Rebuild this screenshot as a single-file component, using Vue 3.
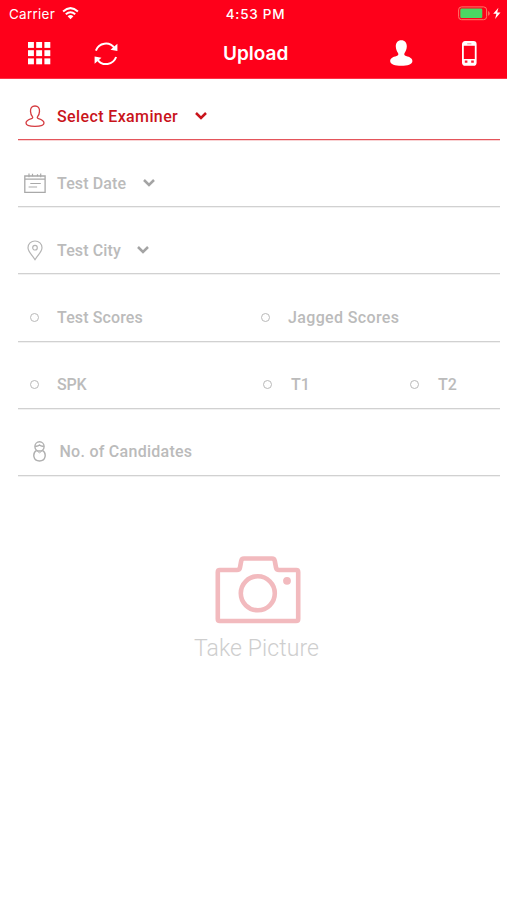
<script setup>
const squares = [0, 8.2, 16.4]
</script>

<template>
  <main class="screen">
    <header class="header">
      <div class="status">
        <div class="carrier">
          <span class="carrier-name">Carrier</span>
          <svg class="wifi" width="17" height="13" viewBox="0 0 17 13">
            <path d="M1.1 4.4 Q8.5 -2.2 15.9 4.4 M3.8 7.3 Q8.5 3.2 13.2 7.3" fill="none" stroke="#fff" stroke-width="2" />
            <path d="M5.6 9.2 Q8.5 6.8 11.4 9.2 L8.5 12.2Z" fill="#fff" />
          </svg>
        </div>
        <time class="clock">4:53 PM</time>
        <div class="power">
          <svg width="44" height="15" viewBox="0 0 44 15">
            <rect x=".6" y=".9" width="28" height="12.8" rx="3" fill="none" stroke="#ff7668" stroke-width="1" />
            <rect x="2.3" y="2.6" width="22" height="9.4" rx="1.3" fill="#4bd763" />
            <path d="M30.1 5v4.8q1.6-.8 1.6-2.4T30.1 5Z" fill="#ff7668" />
            <path d="M40.4 1.7 35.2 7.8h3.2l-1.3 5.1 5.4-6.4h-3.3Z" fill="#fff" />
          </svg>
        </div>
      </div>
      <nav class="bar">
        <svg class="grid-icon" width="23" height="23" viewBox="0 0 23 23" fill="#fff">
          <template v-for="y in squares" :key="y">
            <rect v-for="x in squares" :key="x" :x="x" :y="y" width="5.9" height="5.9" />
          </template>
        </svg>
        <svg class="sync-icon" width="24" height="24" viewBox="0 0 24 24">
          <path d="M1.9 8.6A10.6 10.6 0 0 1 20.4 5.8 M22.1 15A10.6 10.6 0 0 1 3.6 17.8" fill="none" stroke="#fff" stroke-width="2" />
          <path d="M23.4 1.8v7.2l-6.9-1.2Z M.6 21.8v-7.2l6.9 1.2Z" fill="#fff" />
        </svg>
        <h1 class="title">Upload</h1>
        <svg class="person-icon" width="23" height="27" viewBox="0 0 23 27">
          <path d="M11.3.2C7.7.2 5.7 2.7 5.8 6.6c.1 2.9 1.2 5 2.2 6.5.8 1.3.3 2.4-1.4 3C2.8 17.2.2 18.3.2 21.2c0 3.2 5 4.5 11.1 4.5s11.1-1.3 11.1-4.5c0-2.9-2.6-4-6.4-5.1-1.7-.6-2.2-1.7-1.4-3 1-1.5 2.1-3.6 2.2-6.5C16.9 2.7 14.9.2 11.3.2Z" fill="#fff" />
        </svg>
        <svg class="phone-icon" width="15" height="25" viewBox="0 0 15 25">
          <rect x=".9" y=".9" width="12.8" height="23" rx="2.2" fill="none" stroke="#fff" stroke-width="1.8" />
          <path d="M1 1h12.5v3.7H1Z M1 17.9h12.5v5.9H1Z" fill="#fff" />
          <path d="M5.2 2.8h4.2" stroke="#fe6b78" stroke-width=".8" />
          <path d="M2.8 20.7h2.6 M9.2 20.7h2.6" stroke="#fe1c34" stroke-width="2.2" />
        </svg>
      </nav>
    </header>

    <section class="form">
      <div class="row selected">
        <span class="icon">
          <svg width="20" height="23" viewBox="0 0 20 23">
            <path d="M10 1C6.9 1 5.3 3.1 5.5 6.4c.1 2.3.9 4 1.9 5.2.7.9.3 1.7-.9 2C3.2 14.6 1 15.6 1 18c0 2.5 4 3.4 9 3.4s9-.9 9-3.4c0-2.4-2.2-3.4-5.5-4.4-1.2-.3-1.6-1.1-.9-2 1-1.2 1.8-2.9 1.9-5.2C14.7 3.1 13.1 1 10 1Z" fill="none" stroke="#d53b40" stroke-width="1.3" />
          </svg>
        </span>
        <span class="label lowered examiner">Select Examiner</span>
        <svg class="chevron" width="14" height="10" viewBox="0 0 14 10"><path d="m2 2 5 5 5-5" /></svg>
      </div>
      <div class="row">
        <span class="icon">
          <svg width="22" height="21" viewBox="0 0 22 21" fill="none" stroke="#a9a9a9">
            <path d="M.8 3h20.3v16.4H.8Z M.8 6.2h20.3" stroke-width="1.3" />
            <path d="M5 .5v3.8 M8.5 .8v2.4 M16.7 .5v3.8 M13.5 1.2v2 M6.3 10.5h10.5 M4.6 14h8.5" stroke-width="1.2" />
          </svg>
        </span>
        <span class="label lowered">Test Date</span>
        <svg class="chevron" width="14" height="10" viewBox="0 0 14 10"><path d="m2 2 5 5 5-5" /></svg>
      </div>
      <div class="row">
        <span class="icon">
          <svg width="16" height="21" viewBox="0 0 16 21" fill="none" stroke="#b5b5b5" stroke-width="1.2">
            <path d="M8 1C4 1 1 3.9 1 7.7c0 4.1 4.2 7.4 7 12 2.8-4.6 7-7.9 7-12C15 3.9 12 1 8 1Z" />
            <circle cx="8" cy="7.7" r="2.3" />
          </svg>
        </span>
        <span class="label lowered">Test City</span>
        <svg class="chevron" width="14" height="10" viewBox="0 0 14 10"><path d="m2 2 5 5 5-5" /></svg>
      </div>
      <div class="row choices two">
        <div class="choice"><i class="radio"></i><span class="label lowered">Test Scores</span></div>
        <div class="choice"><i class="radio"></i><span class="label lowered jagged">Jagged Scores</span></div>
      </div>
      <div class="row choices three">
        <div class="choice"><i class="radio"></i><span class="label spk">SPK</span></div>
        <div class="choice t-one"><i class="radio"></i><span class="label">T1</span></div>
        <div class="choice t-two"><i class="radio"></i><span class="label">T2</span></div>
      </div>
      <div class="row candidates-row">
        <span class="icon">
          <svg width="13" height="21" viewBox="0 0 13 21" fill="none" stroke="#b0b0b0" stroke-width="1.4">
            <circle cx="6.5" cy="5.4" r="4.6" />
            <path d="M2.2 5.1Q4.5 5.8 6.5 4 8.5 5.8 10.8 5.1 M3.7 9.3C-.8 12-.1 20 6.5 20S13.8 12 9.3 9.3" />
            <path d="M4.2 10.1 6.5 11.8l2.3-1.7" stroke-width="1" />
          </svg>
        </span>
        <span class="label candidates">No. of Candidates</span>
      </div>
    </section>

    <div class="capture">
      <svg width="86" height="69" viewBox="0 0 86 69" fill="none" stroke="#f2babe" stroke-width="4.6" stroke-linejoin="round">
        <path d="M4.8 14H22Q24.5 14 25 11.5L26.2 5Q26.6 2.5 29 2.5H57Q59.4 2.5 59.8 5L61 11.5Q61.5 14 64 14H81.2Q83.2 14 83.2 16V63Q83.2 65 81.2 65H4.8Q2.8 65 2.8 63V16Q2.8 14 4.8 14Z" />
        <circle cx="42.8" cy="37.3" r="17" />
        <circle cx="72" cy="24.8" r="3.9" fill="#f2babe" stroke="none" />
      </svg>
      <span class="capture-label">Take Picture</span>
    </div>
  </main>
</template>

<style>
body {
  margin: 0;
  background: #fff;
}
</style>

<style scoped>
.screen {
  width: 507px;
  height: 900px;
  background: #fff;
  font-family: Roboto, sans-serif;
  overflow: hidden;
}
.header {
  box-sizing: border-box;
  height: 79px;
  border-bottom: 1px solid #fe3348;
  background: #fe001a;
  color: #fff;
  font-family: Inter, sans-serif;
}
.status {
  display: grid;
  grid-template-columns: 1fr auto 1fr;
  align-items: center;
  height: 27px;
  padding: 0 5px 0 9px;
}
.carrier {
  display: flex;
  align-items: center;
  gap: 7px;
}
.carrier-name {
  font-size: 13.5px;
  letter-spacing: 0.25px;
}
.clock {
  font-size: 13.5px;
  font-weight: 500;
  letter-spacing: 0.75px;
}
.power {
  display: flex;
  justify-content: flex-end;
}
.bar {
  display: flex;
  align-items: center;
  height: 53px;
  padding-left: 28px;
}
.bar svg {
  flex: none;
}
.sync-icon {
  margin-left: 43px;
}
.title {
  width: 66px;
  margin: 0 0 0 105px;
  font-size: 19px;
  font-weight: 600;
  line-height: 24px;
}
.person-icon {
  margin-left: 101px;
}
.phone-icon {
  margin-left: 48.5px;
}
.form {
  padding: 0 7px 0 18px;
}
.row {
  box-sizing: border-box;
  display: flex;
  align-items: center;
  height: 67.2px;
  padding-top: 20px;
  border-bottom: 1px solid #d1d1d1;
  box-shadow: 0 1px #f1f1f1;
  color: #bbb;
}
.row.selected {
  height: 61px;
  padding-top: 14px;
  border-bottom: 1px solid #e4555b;
  box-shadow: 0 1px #f9d3d4;
  color: #c9141b;
}
.icon {
  display: flex;
  justify-content: center;
  width: 34px;
  margin-right: 5px;
}
.label {
  font-size: 16px;
  font-weight: 500;
  line-height: 20px;
  letter-spacing: 0.12px;
  white-space: nowrap;
}
.lowered {
  padding-top: 2px;
}
.examiner {
  letter-spacing: 0.38px;
}
.jagged {
  letter-spacing: 0.36px;
}
.spk {
  letter-spacing: -0.2px;
}
.candidates {
  letter-spacing: 0.26px;
}
.chevron {
  margin-left: 15.5px;
  fill: none;
  stroke: #a4a4a4;
  stroke-width: 2.5;
}
.selected .chevron {
  stroke: #c9141b;
}
.choices {
  display: grid;
  padding-left: 12px;
}
.two {
  grid-template-columns: 231px 1fr;
}
.three {
  grid-template-columns: 233px 147px 1fr;
}
.choice {
  display: flex;
  align-items: center;
  gap: 18px;
}
.radio {
  box-sizing: border-box;
  width: 9px;
  height: 9px;
  border: 1.3px solid #b9b9b9;
  border-radius: 50%;
}
.t-one,
.t-two {
  gap: 19px;
}
.candidates-row .icon {
  width: 42px;
  margin-right: -0.5px;
}
.capture {
  display: flex;
  flex-direction: column;
  align-items: center;
  gap: 10px;
  padding: 80px 0 0 9px;
}
.capture-label {
  margin-right: 3px;
  color: #cecece;
  font-size: 23px;
  font-weight: 300;
  line-height: 28px;
  letter-spacing: 0.08px;
}
</style>
